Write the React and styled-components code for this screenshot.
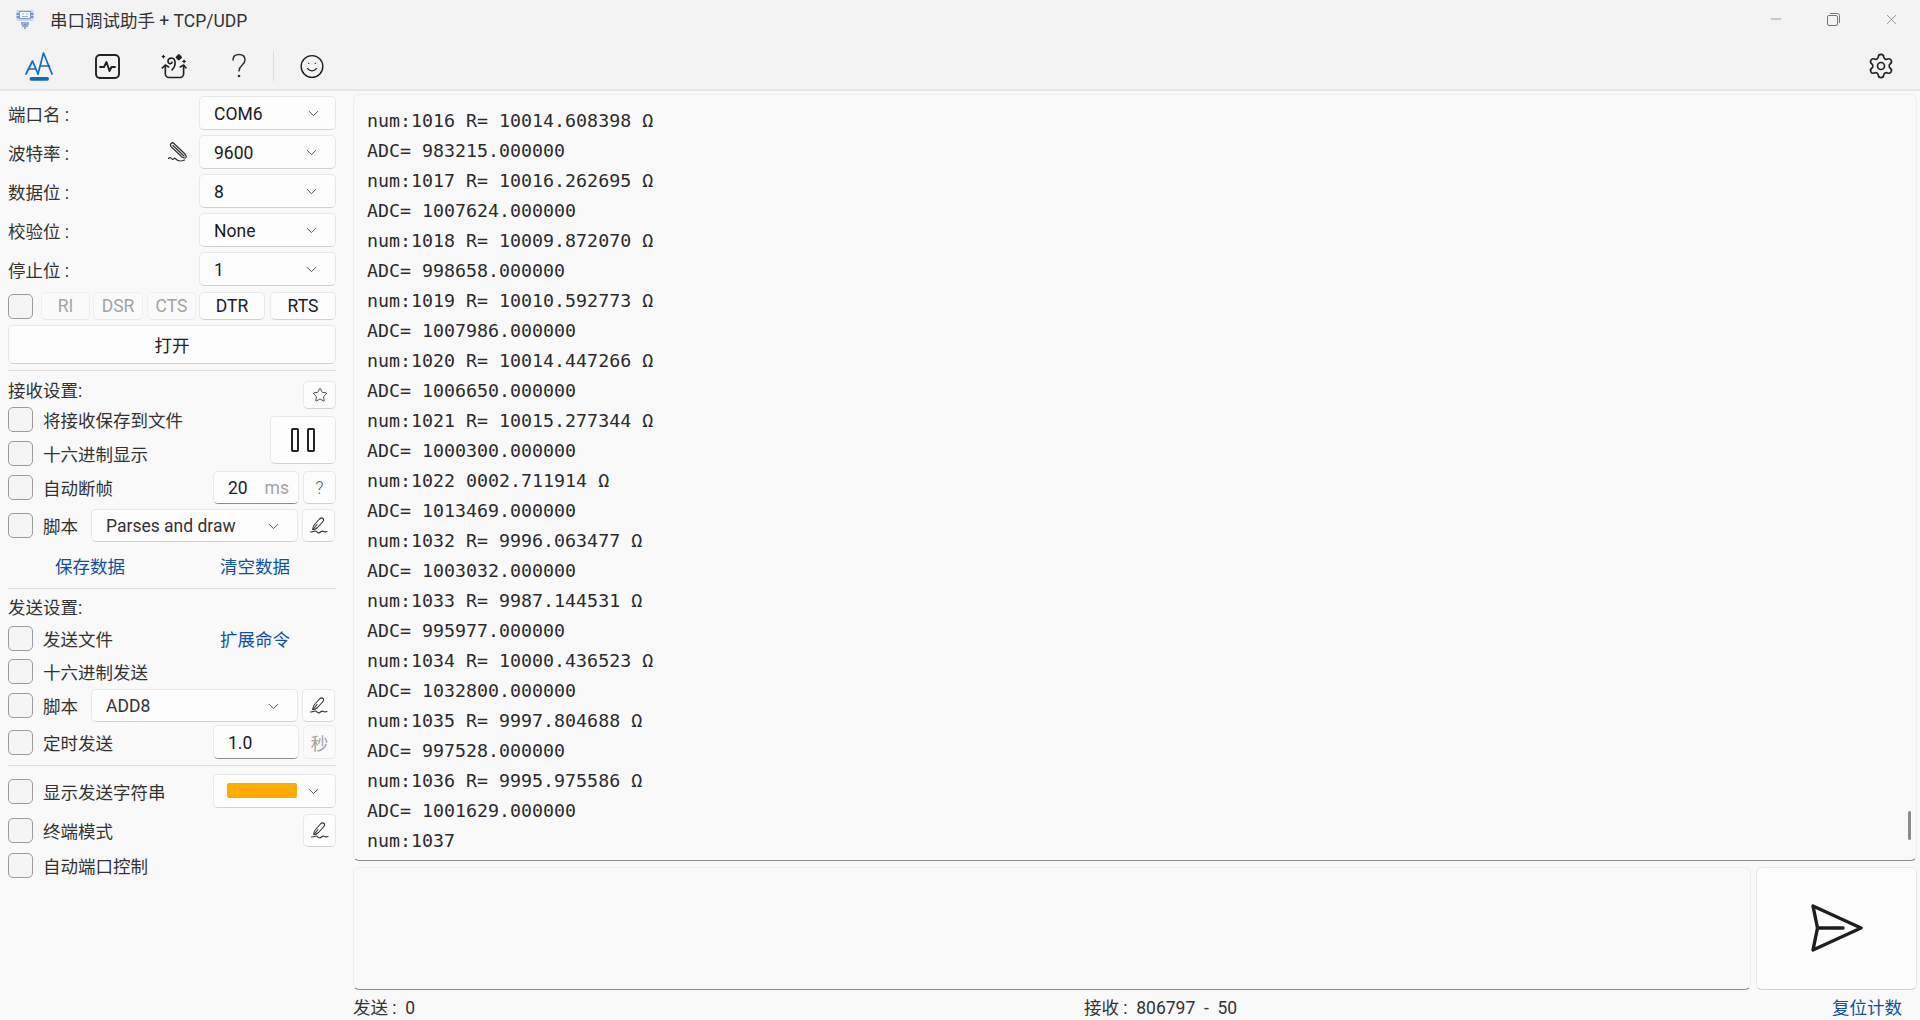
import React from 'react';
import styled, { createGlobalStyle } from 'styled-components';
import { ChevronDown, Settings, Smile, Star, Minus, X } from 'lucide-react';

const GlobalStyle = createGlobalStyle`
  html, body {
    margin: 0;
    padding: 0;
    height: 100%;
    overflow: hidden;
    background: #f9f9f9;
  }
  * { box-sizing: border-box; }
  body {
    font-family: Roboto, "Noto Sans CJK SC", sans-serif;
    font-size: 17.5px;
    color: #1b1b1b;
  }
`;

const Page = styled.div`
  height: 1020px;
  display: flex;
  flex-direction: column;
`;

const TitleBar = styled.div`
  height: 45px;
  flex-shrink: 0;
  display: flex;
  align-items: center;
  background: #f3f3f3;
  padding: 0 0 7px 16px;
`;

const AppTitle = styled.span`
  margin-left: 16px;
  font-size: 17.5px;
  color: #333;
  white-space: pre;
`;

const WindowControls = styled.div`
  margin-left: auto;
  display: flex;
  align-items: center;
  gap: 43px;
  padding-right: 20px;
  color: #777;
`;

const Toolbar = styled.div`
  height: 46px;
  flex-shrink: 0;
  display: flex;
  align-items: center;
  background: #f3f3f3;
  border-bottom: 2px solid #e6e6e6;
  padding: 0 25px 2px 25px;
  color: #222;
`;

const ToolIcon = styled.span`
  display: flex;
  align-items: center;
  justify-content: center;
  width: ${({ $w }) => $w}px;
  margin-left: ${({ $ml }) => $ml || 0}px;
`;

const ToolDivider = styled.span`
  width: 1px;
  height: 30px;
  margin-left: 21px;
  background: #dcdcdc;
`;

const GearSlot = styled.span`
  margin-left: auto;
  display: flex;
`;

const Body = styled.div`
  flex: 1;
  min-height: 0;
  display: flex;
`;

const Sidebar = styled.div`
  width: 353px;
  flex-shrink: 0;
  padding: 5px 17px 0 8px;
  display: flex;
  flex-direction: column;
`;

const Row = styled.div`
  height: ${({ $h }) => $h}px;
  margin-top: ${({ $mt }) => $mt || 0}px;
  flex-shrink: 0;
  display: flex;
  align-items: center;
`;

const Label = styled.span`
  color: #333;
  white-space: pre;
  margin-bottom: ${({ $lift }) => $lift || 0}px;
`;

const Select = styled.div`
  width: ${({ $w }) => $w}px;
  height: 100%;
  margin-left: ${({ $ml }) => $ml || 0}px;
  flex-shrink: 0;
  display: flex;
  align-items: center;
  justify-content: space-between;
  padding: 1px ${({ $pr }) => $pr || 15}px 0 ${({ $pl }) => $pl || 14}px;
  background: #fdfdfd;
  border: 1px solid #e8e8e8;
  border-bottom-color: #d2d2d2;
  border-radius: 5px;
  color: ${({ $muted }) => ($muted ? '#333' : '#1b1b1b')};
`;

const Btn = styled.div`
  width: ${({ $w }) => ($w ? `${$w}px` : '100%')};
  height: 100%;
  flex-shrink: 0;
  margin-left: ${({ $ml }) => $ml || 0}px;
  display: flex;
  align-items: center;
  justify-content: center;
  background: ${({ $off }) => ($off ? '#fafafa' : '#fdfdfd')};
  border: 1px solid ${({ $off }) => ($off ? '#efefef' : '#e8e8e8')};
  border-bottom-color: ${({ $off }) => ($off ? '#e8e8e8' : '#d2d2d2')};
  border-radius: 5px;
  color: ${({ $off }) => ($off ? '#a3a3a3' : '#222')};
`;

const HelpBtn = styled(Btn)`
  color: #555;
  font-weight: 300;
`;

const Check = styled.span`
  width: 25px;
  height: 25px;
  flex-shrink: 0;
  margin-right: ${({ $mr }) => ($mr === undefined ? 10 : $mr)}px;
  background: #f5f5f5;
  border: 1.5px solid #9c9c9c;
  border-radius: 5px;
`;

const Divider = styled.div`
  height: 1px;
  flex-shrink: 0;
  margin-top: 6px;
  background: #dedede;
`;

const RecvBlock = styled.div`
  margin-top: -2px;
  display: grid;
  grid-template-columns: 1fr 66px;
  grid-template-rows: 25px 25px;
  row-gap: 9px;
`;

const CheckLine = styled.div`
  display: flex;
  align-items: center;
`;

const PauseBtn = styled(Btn)`
  grid-column: 2;
  grid-row: 1 / span 2;
  height: 48px;
  align-self: end;
  margin-bottom: 2px;
  gap: 8px;
`;

const PauseBar = styled.span`
  width: 8px;
  height: 24px;
  border: 2px solid #222;
  border-radius: 2px;
`;

const NumberInput = styled.div`
  width: 86px;
  height: 100%;
  margin-left: auto;
  flex-shrink: 0;
  display: flex;
  align-items: center;
  justify-content: space-between;
  padding: 1px 9px 0 14px;
  background: #fdfdfd;
  border: 1px solid #e8e8e8;
  border-bottom: 1px solid #8f8f8f;
  border-radius: 5px;
`;

const Unit = styled.span`
  color: #a3a3a3;
`;

const LinkRow = styled(Row)`
  padding-left: 47px;
  gap: 95px;
`;

const TextLink = styled.span`
  color: #0f4f9f;
  white-space: nowrap;
  margin-left: ${({ $ml }) => $ml || 0}px;
`;

const Swatch = styled.span`
  width: 70px;
  height: 15px;
  margin-bottom: 2px;
  border-radius: 2px;
  background: #ffab00;
`;

const DishSlot = styled.span`
  margin-left: auto;
  margin-right: 10px;
  display: flex;
`;

const PushRight = styled.span`
  margin-left: auto;
  height: 100%;
  display: flex;
`;

const Main = styled.div`
  flex: 1;
  min-width: 0;
  display: flex;
  flex-direction: column;
  padding: 3px 3px 0 0;
`;

const LogBox = styled.div`
  position: relative;
  flex: 1;
  min-height: 0;
  padding: 11px 0 0 13px;
  background: #f9f9f9;
  border: 1px solid #eeeeee;
  border-bottom: 1px solid #8c8c8c;
  border-radius: 6px;
  overflow: hidden;
`;

const LogLine = styled.div`
  height: 30px;
  line-height: 30px;
  font-family: "DejaVu Sans Mono", monospace;
  font-size: 18.3px;
  color: #2b2b2b;
  white-space: pre;
`;

const ScrollThumb = styled.span`
  position: absolute;
  right: 5px;
  bottom: 20px;
  width: 3px;
  height: 29px;
  border-radius: 2px;
  background: #8a8a8a;
`;

const SendRow = styled.div`
  height: 123px;
  flex-shrink: 0;
  margin-top: 6px;
  display: flex;
  gap: 5px;
`;

const InputBox = styled.div`
  flex: 1;
  background: #f9f9f9;
  border: 1px solid #eeeeee;
  border-bottom: 1px solid #8c8c8c;
  border-radius: 6px;
`;

const SendBtn = styled(Btn)`
  width: 161px;
  border-radius: 6px;
  padding-bottom: 2px;
`;

const StatusBar = styled.div`
  height: 30px;
  flex-shrink: 0;
  display: flex;
  align-items: center;
  padding: 2px 15px 0 0;
  color: #333;
  white-space: pre;
`;

const StatusSent = styled.span`
  width: 731px;
`;

const StatusLink = styled(TextLink)`
  margin-left: auto;
`;

const LOG = [
  'num:1016 R= 10014.608398 Ω',
  'ADC= 983215.000000',
  'num:1017 R= 10016.262695 Ω',
  'ADC= 1007624.000000',
  'num:1018 R= 10009.872070 Ω',
  'ADC= 998658.000000',
  'num:1019 R= 10010.592773 Ω',
  'ADC= 1007986.000000',
  'num:1020 R= 10014.447266 Ω',
  'ADC= 1006650.000000',
  'num:1021 R= 10015.277344 Ω',
  'ADC= 1000300.000000',
  'num:1022 0002.711914 Ω',
  'ADC= 1013469.000000',
  'num:1032 R= 9996.063477 Ω',
  'ADC= 1003032.000000',
  'num:1033 R= 9987.144531 Ω',
  'ADC= 995977.000000',
  'num:1034 R= 10000.436523 Ω',
  'ADC= 1032800.000000',
  'num:1035 R= 9997.804688 Ω',
  'ADC= 997528.000000',
  'num:1036 R= 9995.975586 Ω',
  'ADC= 1001629.000000',
  'num:1037',
];

const PORT_ROWS = [
  ['端口名 :', 'COM6', false, 13],
  ['波特率 :', '9600', true],
  ['数据位 :', '8'],
  ['校验位 :', 'None'],
  ['停止位 :', '1'],
];

const Chevron = () => <ChevronDown size={17} strokeWidth={1.4} color="#555" />;

const AppIcon = () => (
  <svg width="18" height="20" viewBox="0 0 18 20" fill="none">
    <rect x="0.500" y="1" width="17" height="11" rx="1" fill="#c9d6ec" />
    <rect x="3.500" y="2.500" width="11" height="7" fill="#f4f6fb" stroke="#7d98cc" />
    <path d="M6 5h2M10 5h2M6 7.500h6" stroke="#9db2da" />
    <path d="M.5 5h2.500M15 5h2.500M.5 8h2.500M15 8h2.500" stroke="#5f80c2" strokeWidth="1.300" />
    <path d="M5 13h8v3H5z" fill="#97aed9" />
    <path d="M9 15v5M7 16v2M11 16v2" stroke="#5f80c2" strokeWidth="1.300" />
  </svg>
);

const FontIcon = () => (
  <svg width="28" height="30" viewBox="0 0 28 30" fill="none" stroke="#0f6cbd" strokeWidth="1.700" strokeLinecap="round" strokeLinejoin="round">
    <path d="M1 23 7.500 10 13 23" />
    <path d="M3.500 18h7" />
    <path d="M13 23 18.500 2 27 23" />
    <path d="M15.500 15h9" />
    <rect x="4.500" y="26" width="19.500" height="3.700" rx="1.850" fill="#0f6cbd" stroke="none" />
  </svg>
);

const PulseIcon = () => (
  <svg width="25" height="25" viewBox="0 0 25 25" fill="none" stroke="#222" strokeWidth="1.900" strokeLinecap="round" strokeLinejoin="round">
    <rect x="1" y="1" width="23" height="23" rx="4" />
    <path d="M5 13h4l2.500-5 3 9 2-4h3.500" />
  </svg>
);

const PotIcon = () => (
  <svg width="27" height="26" viewBox="0 0 27 26" fill="none" stroke="#222" strokeWidth="1.700" strokeLinecap="round" strokeLinejoin="round">
    <path d="M4.500 13V21a4 4 0 0 0 4 4h11a4 4 0 0 0 4-4V13" />
    <path d="M1.500 15 4.500 12 8 14M20 14 23.500 12 26 15" />
    <path d="M11.500 17c3-3 3.500-6 3-9-.5-3-4-4-6-2.500-2 1.500-1.500 4.500.5 5 1.500.4 2.500-.5 2.500-1.500" />
    <path d="M18.500 1.500l2.500 2.500-2.500 2.500-2.500-2.500z" fill="#222" />
    <path d="M24 7v2.500M22.750 8.250h2.500M2.500 2v2.500M1.250 3.250h2.500" strokeWidth="1.400" />
  </svg>
);

const DishIcon = () => (
  <svg width="21" height="20" viewBox="0 0 21 20" fill="none" stroke="#333" strokeWidth="1.200" strokeLinecap="round" strokeLinejoin="round">
    <path d="M3 1.500c1-1 2-1 3 0l10.500 10c1.500 1.500 2 3 1.500 4-1 .8-2.500.5-4-.5L3.500 5c-1-1-1.500-2.500-.5-3.500z" />
    <path d="M5 3.500 16 14" />
    <path d="M.5 16.500c1-1 2-1.500 3 0s2 1 3-.5c1 1 3 3 6 3 2 0 3-.5 4-1" />
  </svg>
);

const PenIcon = () => (
  <svg width="18" height="18" viewBox="0 0 18 18" fill="none" stroke="#333" strokeWidth="1.100" strokeLinecap="round" strokeLinejoin="round">
    <path d="M3 12.500c-.5-2 .3-3.500 1.500-5L9.500 2c1-1 2.500-1.500 3.500-.5s.5 2.500-.5 3.500L7.500 10.500C6 11.800 4.500 12.800 3 12.500z" />
    <path d="M3 12.500 7 7.500" />
    <path d="M.5 15c2 0 3-.5 4.500-1 1-.3 1.500 1 2.500 1.500s2 .5 3-.5 2-1 3-.5 2 .5 3.500 0" />
  </svg>
);

const SendIcon = () => (
  <svg width="52" height="48" viewBox="0 0 52 48" fill="none" stroke="#1f1f1f" strokeWidth="3.400" strokeLinecap="round" strokeLinejoin="round">
    <path d="M2 2 50 24 2 46 6.500 24z" />
    <path d="M6.500 24H32" />
  </svg>
);

const RestoreIcon = () => (
  <svg width="13" height="13" viewBox="0 0 13 13" fill="none" stroke="#777" strokeWidth="1">
    <rect x="0.500" y="2.500" width="10" height="10" rx="1.500" />
    <path d="M3 .5h7.500a2 2 0 0 1 2 2V10" />
  </svg>
);

const App = () => (
  <Page>
    <GlobalStyle />
    <TitleBar>
      <AppIcon />
      <AppTitle>串口调试助手 + TCP/UDP</AppTitle>
      <WindowControls>
        <Minus size={16} strokeWidth={1} />
        <RestoreIcon />
        <X size={17} strokeWidth={1} />
      </WindowControls>
    </TitleBar>

    <Toolbar>
      <ToolIcon $w={28}><FontIcon /></ToolIcon>
      <ToolIcon $w={25} $ml={42}><PulseIcon /></ToolIcon>
      <ToolIcon $w={26} $ml={41}><PotIcon /></ToolIcon>
      <ToolIcon $w={26} $ml={39}>
        <svg width="16" height="26" viewBox="0 0 16 26" fill="none" stroke="#333" strokeWidth="1.500" strokeLinecap="round">
          <path d="M2 7c0-3.500 2.500-5.500 6-5.500s6 2 6 5.500c0 5-6 5-6 11" />
          <circle cx="8" cy="23" r="0.600" />
        </svg>
      </ToolIcon>
      <ToolDivider />
      <ToolIcon $w={26} $ml={25}><Smile size={31} strokeWidth={1.300} /></ToolIcon>
      <GearSlot><Settings size={28} strokeWidth={1.400} /></GearSlot>
    </Toolbar>

    <Body>
      <Sidebar>
        {PORT_ROWS.map(([label, value, dish, pr], i) => (
          <Row key={label} $h={34} $mt={i ? 5 : 0}>
            <Label>{label}</Label>
            {dish ? <DishSlot><DishIcon /></DishSlot> : <PushRight />}
            <Select $w={137} $pr={pr}>
              {value}
              <Chevron />
            </Select>
          </Row>
        ))}

        <Row $h={28} $mt={6}>
          <Check $mr={8} />
          <Btn $w={49} $off>RI</Btn>
          <Btn $w={50} $ml={3} $off>DSR</Btn>
          <Btn $w={49} $ml={4} $off>CTS</Btn>
          <Btn $w={66} $ml={3}>DTR</Btn>
          <Btn $w={66} $ml={5}>RTS</Btn>
        </Row>
        <Row $h={39} $mt={5}>
          <Btn>打开</Btn>
        </Row>
        <Divider />

        <Row $h={28} $mt={10}>
          <Label $lift={12}>接收设置:</Label>
          <PushRight />
          <Btn $w={33}><Star size={16} strokeWidth={1.200} /></Btn>
        </Row>
        <RecvBlock>
          <CheckLine><Check /><Label>将接收保存到文件</Label></CheckLine>
          <PauseBtn $w={66}><PauseBar /><PauseBar /></PauseBtn>
          <CheckLine><Check /><Label>十六进制显示</Label></CheckLine>
        </RecvBlock>
        <Row $h={33} $mt={5}>
          <Check />
          <Label>自动断帧</Label>
          <NumberInput>20<Unit>ms</Unit></NumberInput>
          <HelpBtn $w={33} $ml={4}>?</HelpBtn>
        </Row>
        <Row $h={33} $mt={5}>
          <Check />
          <Label>脚本</Label>
          <Select $w={207} $ml={13} $muted>
            Parses and draw
            <Chevron />
          </Select>
          <Btn $w={33} $ml={4}><PenIcon /></Btn>
        </Row>
        <LinkRow $h={34} $mt={6}>
          <TextLink>保存数据</TextLink>
          <TextLink>清空数据</TextLink>
        </LinkRow>
        <Divider />

        <Row $h={24} $mt={8}>
          <Label $lift={6}>发送设置:</Label>
        </Row>
        <Row $h={25} $mt={5}>
          <Check />
          <Label>发送文件</Label>
          <TextLink $ml={107}>扩展命令</TextLink>
        </Row>
        <Row $h={25} $mt={8}>
          <Check />
          <Label>十六进制发送</Label>
        </Row>
        <Row $h={33} $mt={5}>
          <Check />
          <Label>脚本</Label>
          <Select $w={207} $ml={13} $muted>
            ADD8
            <Chevron />
          </Select>
          <Btn $w={33} $ml={4}><PenIcon /></Btn>
        </Row>
        <Row $h={34} $mt={3}>
          <Check />
          <Label>定时发送</Label>
          <NumberInput>1.0</NumberInput>
          <Btn $w={33} $ml={4} $off>秒</Btn>
        </Row>
        <Divider />

        <Row $h={34} $mt={8}>
          <Check />
          <Label>显示发送字符串</Label>
          <PushRight />
          <Select $w={123} $pr={13} $pl={13}>
            <Swatch />
            <Chevron />
          </Select>
        </Row>
        <Row $h={33} $mt={6}>
          <Check />
          <Label>终端模式</Label>
          <PushRight />
          <Btn $w={33}><PenIcon /></Btn>
        </Row>
        <Row $h={25} $mt={6}>
          <Check />
          <Label>自动端口控制</Label>
        </Row>
      </Sidebar>

      <Main>
        <LogBox>
          {LOG.map((line, i) => (
            <LogLine key={i}>{line}</LogLine>
          ))}
          <ScrollThumb />
        </LogBox>
        <SendRow>
          <InputBox />
          <SendBtn><SendIcon /></SendBtn>
        </SendRow>
        <StatusBar>
          <StatusSent>发送 :  0</StatusSent>
          <span>接收 :  806797  -  50</span>
          <StatusLink>复位计数</StatusLink>
        </StatusBar>
      </Main>
    </Body>
  </Page>
);

export default App;
